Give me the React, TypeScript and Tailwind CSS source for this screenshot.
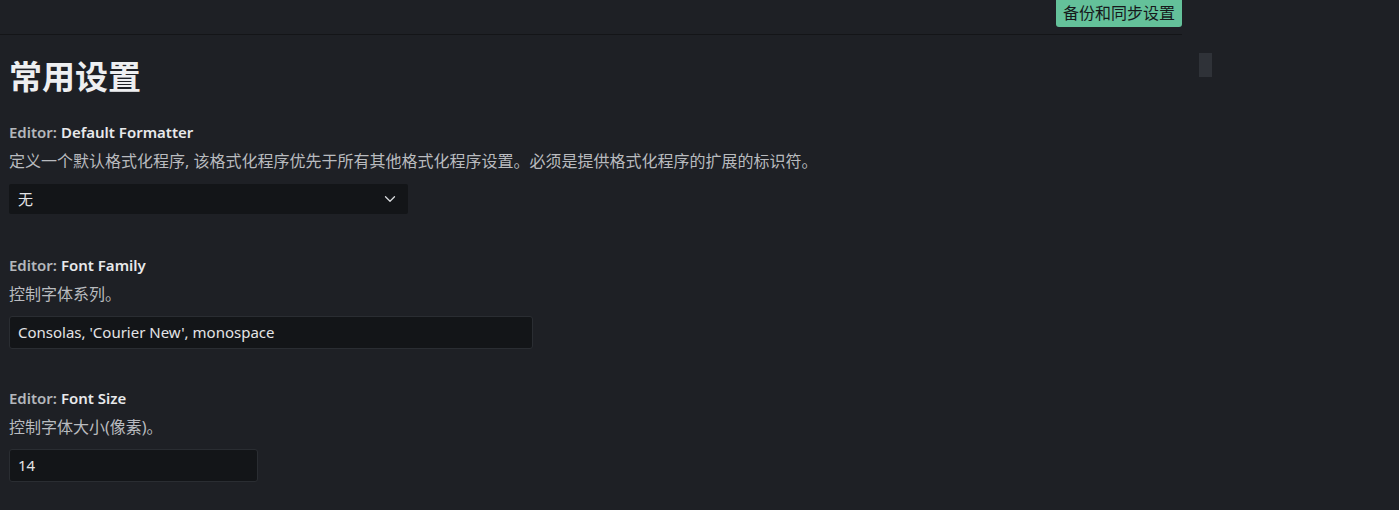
import { ChevronDown } from "lucide-react";

const font = "font-['Noto_Sans','Noto_Sans_CJK_SC',sans-serif]";

function Label({ name }: { name: string }) {
  return (
    <div className="text-[15px] leading-[20px] font-semibold">
      <span className="text-[#b4b7bc]">Editor: </span>
      <span className="text-[#e8e9eb]">{name}</span>
    </div>
  );
}

function Desc({ children }: { children: string }) {
  return <p className="mt-[9px] text-[16px] leading-[20px] text-[#b9bbbf]">{children}</p>;
}

export default function App() {
  return (
    <div className={`${font} flex h-[510px] w-full overflow-hidden bg-[#1e2025]`}>
      <div className="w-[1182px] shrink-0">
        <div className="flex h-[35px] justify-end border-b border-[#141518]">
          <button className="h-[27px] rounded-b-[3px] bg-[#64c19a] px-[7px] text-[16px] leading-[27px] text-[#16181a]">
            备份和同步设置
          </button>
        </div>
        <div className="px-[9px]">
          <h1 className="mt-[22px] text-[33px] leading-[39px] font-bold text-[#eeeff1]">常用设置</h1>

          <section className="mt-[26px]">
            <Label name="Default Formatter" />
            <Desc>定义一个默认格式化程序, 该格式化程序优先于所有其他格式化程序设置。必须是提供格式化程序的扩展的标识符。</Desc>
            <div className="mt-[13px] flex h-[30px] w-[399px] items-center justify-between rounded-[2px] bg-[#131518] pl-[9px] pr-[9px] text-[15px] text-[#e3e4e6]">
              <span>无</span>
              <ChevronDown size={18} strokeWidth={1.75} className="text-[#d8dadd]" />
            </div>
          </section>

          <section className="mt-[41px]">
            <Label name="Font Family" />
            <Desc>控制字体系列。</Desc>
            <div className="mt-[12px] flex h-[33px] w-[524px] items-center rounded-[3px] border border-[#2a2d32] bg-[#131518] pl-[8px] text-[15px] text-[#e3e4e6]">
              Consolas, 'Courier New', monospace
            </div>
          </section>

          <section className="mt-[39px]">
            <Label name="Font Size" />
            <Desc>控制字体大小(像素)。</Desc>
            <div className="mt-[12px] flex h-[33px] w-[249px] items-center rounded-[3px] border border-[#2a2d32] bg-[#131518] pl-[8px] text-[15px] text-[#e3e4e6]">
              14
            </div>
          </section>
        </div>
      </div>
      <div className="ml-[17px] pt-[53px]">
        <div className="h-[24px] w-[13px] bg-[#2f3238]" />
      </div>
    </div>
  );
}
